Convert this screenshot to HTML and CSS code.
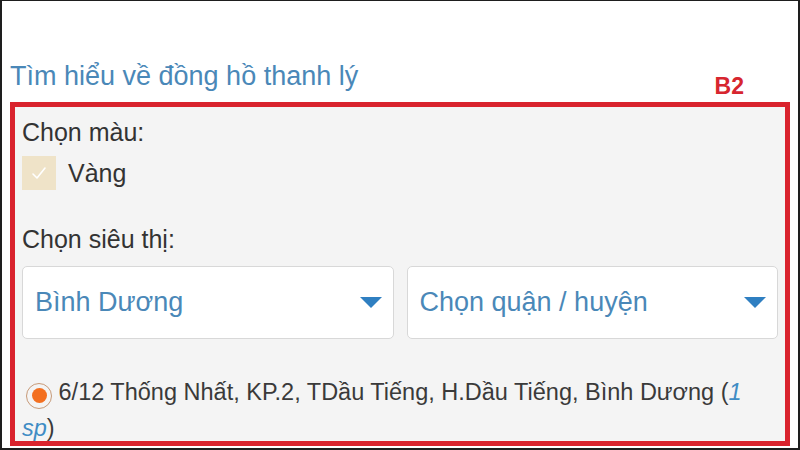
FILE: index.html
```html
<!DOCTYPE html>
<html lang="vi">
<head>
<meta charset="utf-8">
<link rel="stylesheet" href="styles.css">
</head>
<body>
<div class="frame">
  <div class="head">
    <a class="learn">Tìm hiểu về đồng hồ thanh lý</a>
    <span class="tag">B2</span>
  </div>
  <div class="box">
    <div class="label">Chọn màu:</div>
    <label class="color">
      <span class="check"><svg viewBox="0 0 34 34" width="34" height="34"><path d="M11 18 L15 22 L23 12" fill="none" stroke="#fff" stroke-width="1.6" stroke-linecap="round" stroke-linejoin="round"/></svg></span>
      <span>Vàng</span>
    </label>
    <div class="label store">Chọn siêu thị:</div>
    <div class="selects">
      <div class="select"><span>Bình Dương</span><span class="caret"></span></div>
      <div class="select"><span>Chọn quận / huyện</span><span class="caret"></span></div>
    </div>
    <p class="addr"><span class="radio"><span class="dot"></span></span> 6/12 Thống Nhất, KP.2, TDầu Tiếng, H.Dầu Tiếng, Bình Dương (<i class="qty">1</i> <i class="qty">sp</i>)</p>
  </div>
</div>
</body>
</html>
```
FILE: styles.css
```css
* { box-sizing: border-box; }
html, body { margin: 0; padding: 0; background: #fff; }
body { font-family: "Liberation Sans", Arial, sans-serif; }
.frame {
  width: 800px;
  height: 450px;
  border: 2px solid #1e1e1e;
  border-top-width: 1px;
  overflow: hidden;
  background: #fff;
}
.head {
  display: flex;
  justify-content: space-between;
  align-items: flex-end;
  height: 101px;
  padding: 0 54px 0 8px;
}
.learn {
  color: #4a88b8;
  font-size: 27px;
  line-height: 32px;
  margin-bottom: 10px;
}
.tag {
  color: #d7262f;
  font-weight: bold;
  font-size: 23px;
  line-height: 26px;
  margin-bottom: 3px;
}
.box {
  margin: 0 8px 0 8px;
  height: 344px;
  border: 5px solid #d9232d;
  background: #f4f4f4;
  padding: 10px 7px 0 7px;
  color: #333;
}
.label {
  font-size: 25px;
  line-height: 30px;
  color: #333;
}
.color {
  display: flex;
  align-items: center;
  gap: 12px;
  margin-top: 9px;
  font-size: 25px;
  color: #333;
}
.check {
  width: 34px;
  height: 34px;
  background: #efe3c8;
  display: block;
}
.check svg { display: block; }
.store { margin-top: 34px; }
.selects {
  display: flex;
  gap: 13px;
  margin-top: 12px;
}
.select {
  flex: 1;
  height: 73px;
  background: #fff;
  border: 1px solid #d8d8d8;
  border-radius: 5px;
  display: flex;
  align-items: center;
  justify-content: space-between;
  padding: 0 11px 0 12px;
  color: #4a88b8;
  font-size: 27px;
}
.caret {
  width: 0;
  height: 0;
  border-left: 11px solid transparent;
  border-right: 11px solid transparent;
  border-top: 11px solid #2f7fc1;
}
.addr {
  margin: 35px 0 0 0;
  font-size: 23.5px;
  line-height: 36px;
  color: #3a3a3a;
}
.radio {
  display: inline-flex;
  align-items: center;
  justify-content: center;
  width: 26px;
  height: 26px;
  border: 1.5px solid #c79a78;
  border-radius: 50%;
  vertical-align: -3px;
  margin-left: 4px;
}
.dot {
  width: 15px;
  height: 15px;
  border-radius: 50%;
  background: #f37021;
}
.qty { color: #3f8cc4; }
```
